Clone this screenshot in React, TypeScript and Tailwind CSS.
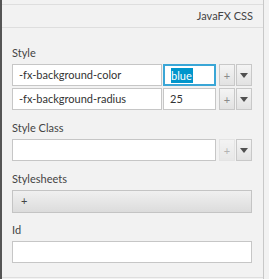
const font = { fontFamily: 'Lato, "Open Sans", sans-serif' };

function SmallButton({ kind, disabled }: { kind: 'plus' | 'menu'; disabled?: boolean }) {
  return (
    <div
      className={
        'w-[16px] h-[22px] flex items-center justify-center border bg-gradient-to-b from-[#f4f4f4] to-[#e2e2e2] ' +
        (disabled ? 'border-[#dcdcdc] opacity-60' : 'border-[#c8c8c8]')
      }
    >
      {kind === 'plus' ? (
        <span className="text-[11px] leading-none text-[#8a8a8a]">+</span>
      ) : (
        <svg width="8" height="5" viewBox="0 0 8 5">
          <path d="M0 0 H8 L4 5 Z" fill="#505050" />
        </svg>
      )}
    </div>
  );
}

function Field({ width, children, focused }: { width: string; children?: React.ReactNode; focused?: boolean }) {
  return (
    <div
      className={
        width +
        ' h-[22px] flex items-center px-[6px] bg-white text-[11px] text-[#333] ' +
        (focused ? 'border-2 border-[#3aa6d6] px-[5px]' : 'border border-[#c6c6c6]')
      }
    >
      {children}
    </div>
  );
}

function Label({ text, className }: { text: string; className: string }) {
  return <div className={'h-[16px] leading-[16px] text-[11px] text-[#444] ' + className}>{text}</div>;
}

export default function App() {
  return (
    <div className="w-[269px] h-[279px] bg-[#f2f2f2] flex overflow-hidden" style={font}>
      <div className="w-[2px] bg-[#555]" />
      <div className="w-[262px] border-r border-[#c8c8c8] flex flex-col">
        <div className="h-[4px]" />
        {/* Header */}
        <div className="h-[24px] border-y border-[#dedede] flex items-center justify-end pr-[10px] text-[11px] text-[#444]">
          JavaFX CSS
        </div>

        <div className="pl-[10px] flex flex-col">
          <Label text="Style" className="mt-[17px]" />
          <div className="mt-[3px] flex flex-col gap-[2px]">
            <div className="flex">
              <Field width="w-[150px]">-fx-background-color</Field>
              <div className="w-[1px]" />
              <Field width="w-[53px]" focused>
                <span className="bg-[#0096cc] text-white leading-[15px] pr-[1px]">blue</span>
              </Field>
              <div className="ml-[3px] flex gap-[1px]">
                <SmallButton kind="plus" />
                <SmallButton kind="menu" />
              </div>
            </div>
            <div className="flex">
              <Field width="w-[150px]">-fx-background-radius</Field>
              <div className="w-[1px]" />
              <Field width="w-[53px]">25</Field>
              <div className="ml-[3px] flex gap-[1px]">
                <SmallButton kind="plus" />
                <SmallButton kind="menu" />
              </div>
            </div>
          </div>

          <Label text="Style Class" className="mt-[10px]" />
          <div className="mt-[3px] flex">
            <Field width="w-[204px]" />
            <div className="ml-[3px] flex gap-[1px]">
              <SmallButton kind="plus" disabled />
              <SmallButton kind="menu" />
            </div>
          </div>

          <Label text="Stylesheets" className="mt-[10px]" />
          <div className="mt-[3px] w-[240px] h-[23px] border border-[#c4c4c4] bg-gradient-to-b from-[#f0f0f0] to-[#dcdcdc] flex items-center pl-[8px] text-[11px] text-[#444]">
            +
          </div>

          <Label text="Id" className="mt-[9px]" />
          <div className="mt-[3px] flex">
            <Field width="w-[240px]" />
          </div>
        </div>
        <div className="mt-auto mb-[1px] border-b border-[#dedede]" />
      </div>
      <div className="flex-1" />
    </div>
  );
}
